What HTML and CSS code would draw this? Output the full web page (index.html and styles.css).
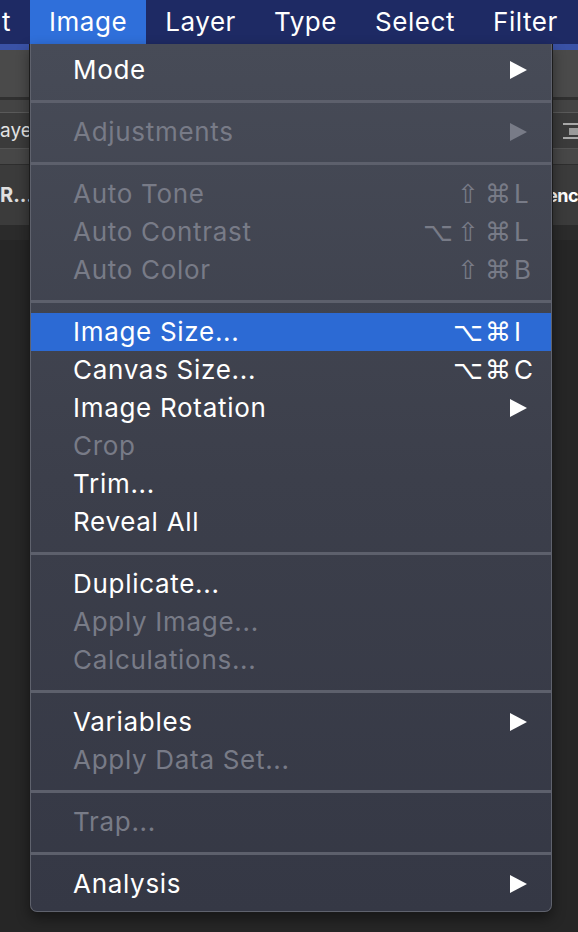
FILE: index.html
```html
<!DOCTYPE html>
<html>
<head>
<meta charset="utf-8">
<link rel="stylesheet" href="styles.css">
</head>
<body>
<div class="menubar">
  <span class="mb-item mb-cut">t</span>
  <span class="mb-item mb-active">Image</span>
  <span class="mb-item">Layer</span>
  <span class="mb-item">Type</span>
  <span class="mb-item">Select</span>
  <span class="mb-item">Filter</span>
</div>
<div class="app">
  <div class="stripe"></div>
  <div class="band b1"></div>
  <div class="line l-dark"></div>
  <div class="band b2"></div>
  <div class="line l-light"></div>
  <div class="band b3">
    <span class="bg-text">aye</span>
    <svg class="align-icon" width="15" height="16" viewBox="0 0 15 16"><rect x="0" y="0" width="15" height="2" fill="#a9a9a9"/><rect x="6" y="5" width="9" height="7" fill="#9a9a9a"/><rect x="0" y="14" width="15" height="2" fill="#a9a9a9"/></svg>
  </div>
  <div class="line l-mid"></div>
  <div class="band b4"></div>
  <div class="line l-dark2"></div>
  <div class="band b5">
    <span class="bg-bold">R...</span>
    <span class="bg-bold clip">enc</span>
  </div>
  <div class="band b6"></div>
</div>

<div class="menu">
  <div class="item"><span class="label">Mode</span><span class="arrow"></span></div>
  <div class="sep"></div>
  <div class="item off"><span class="label">Adjustments</span><span class="arrow"></span></div>
  <div class="sep"></div>
  <div class="item off"><span class="label">Auto Tone</span><span class="sc"><span class="mods"><span class="m">⇧</span><span class="m">⌘</span></span><span class="key">L</span></span></div>
  <div class="item off"><span class="label">Auto Contrast</span><span class="sc"><span class="mods"><span class="m">⌥</span><span class="m">⇧</span><span class="m">⌘</span></span><span class="key">L</span></span></div>
  <div class="item off"><span class="label">Auto Color</span><span class="sc"><span class="mods"><span class="m">⇧</span><span class="m">⌘</span></span><span class="key">B</span></span></div>
  <div class="sep"></div>
  <div class="item hl"><span class="label">Image Size...</span><span class="sc"><span class="mods"><span class="m">⌥</span><span class="m">⌘</span></span><span class="key">I</span></span></div>
  <div class="item"><span class="label">Canvas Size...</span><span class="sc"><span class="mods"><span class="m">⌥</span><span class="m">⌘</span></span><span class="key">C</span></span></div>
  <div class="item"><span class="label">Image Rotation</span><span class="arrow"></span></div>
  <div class="item off"><span class="label">Crop</span></div>
  <div class="item"><span class="label">Trim...</span></div>
  <div class="item"><span class="label">Reveal All</span></div>
  <div class="sep"></div>
  <div class="item"><span class="label">Duplicate...</span></div>
  <div class="item off"><span class="label">Apply Image...</span></div>
  <div class="item off"><span class="label">Calculations...</span></div>
  <div class="sep"></div>
  <div class="item"><span class="label">Variables</span><span class="arrow"></span></div>
  <div class="item off"><span class="label">Apply Data Set...</span></div>
  <div class="sep"></div>
  <div class="item off"><span class="label">Trap...</span></div>
  <div class="sep"></div>
  <div class="item"><span class="label">Analysis</span><span class="arrow"></span></div>
</div>
</body>
</html>
```

FILE: styles.css
```css
* { box-sizing: border-box; }
html, body { margin: 0; padding: 0; }
body {
  width: 578px;
  height: 932px;
  overflow: hidden;
  background: #262626;
  font-family: Inter, "Noto Sans", "DejaVu Sans", sans-serif;
  position: relative;
}
.menubar {
  height: 44px;
  background: #1e2a64;
  display: flex;
  align-items: stretch;
  white-space: nowrap;
  overflow: hidden;
}
.mb-item {
  color: #fff;
  font-size: 26px;
  letter-spacing: 0.55px;
  line-height: 44px;
  padding: 0 19px;
  flex: none;
}
.mb-cut { width: 30px; padding: 0 19px 0 0; text-align: right; direction: rtl; overflow: hidden; }
.mb-active { background: #2f6fda; }

.app { display: flex; flex-direction: column; }
.stripe { height: 6px; background: #3a52a6; }
.band { display: flex; justify-content: space-between; align-items: center; overflow: hidden; }
.b1 { height: 47px; background: #4a4a4a; }
.b2 { height: 12px; background: #444; }
.b3 { height: 35px; background: #3b3b3b; }
.b4 { height: 15px; background: #474747; }
.b5 { height: 60px; background: #3b3b3b; }
.b6 { height: 15px; background: #2b2b2b; }
.line { height: 1px; }
.l-dark { height: 3px; background: #303030; }
.l-light { background: #5a5a5a; }
.l-mid { background: #545454; }
.l-dark2 { background: #2e2e2e; }
.bg-text { color: #e4e4e4; font-size: 19px; font-family: Inter, sans-serif; }
.bg-bold { color: #e0e0e0; font-size: 20px; font-weight: 700; font-family: Inter, sans-serif; }
.clip { color: #fff; white-space: nowrap; font-size: 18px; letter-spacing: -0.5px; }

.menu {
  position: absolute;
  left: 30px;
  top: 44px;
  width: 522px;
  height: 868px;
  padding: 7px 0 8px;
  background: linear-gradient(#474b57, #3c3f4b 50%, #353845);
  border: 1px solid #5f626d;
  border-top: none;
  border-radius: 0 0 7px 7px;
  box-shadow: -1px 0 0 #1c1c1c, 1px 0 0 #1c1c1c, 0 1px 0 #1a1a1a, 0 6px 14px rgba(0,0,0,0.45);
}
.item {
  height: 38px;
  display: flex;
  align-items: center;
  padding: 0 20px 0 42px;
  color: #fff;
  font-size: 26px;
  letter-spacing: 0.7px;
}
.item.off { color: #787b87; }
.item.hl { background: #2c6ad4; }
.label { flex: 1; line-height: 38px; white-space: nowrap; }
.sep { height: 3px; margin: 11px 0 10px; background: #5d606c; }
.arrow {
  width: 0; height: 0;
  margin-right: 4px;
  border-top: 9px solid transparent;
  border-bottom: 9px solid transparent;
  border-left: 17px solid currentColor;
}
.sc { display: flex; align-items: center; letter-spacing: 0; }
.mods { display: flex; justify-content: flex-end; }
.m {
  width: 30px;
  text-align: center;
  font-family: "DejaVu Sans", sans-serif;
  font-size: 26px;
  line-height: 38px;
}
.key { width: 18px; padding-left: 1px; font-size: 26px; line-height: 38px; }
```
